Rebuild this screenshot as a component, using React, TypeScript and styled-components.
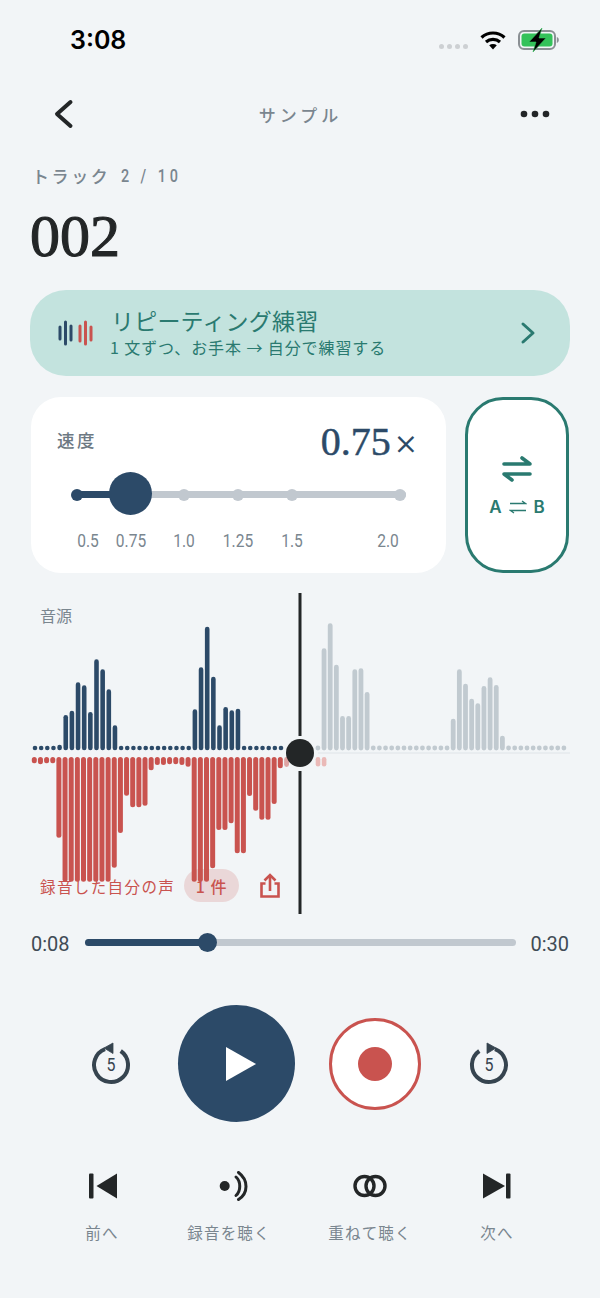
import React from "react";
import styled, { createGlobalStyle } from "styled-components";

const NAVY = "#2c4a68";
const RED = "#c9534f";
const TEAL = "#2a7a70";
const GREY = "#7a868f";
const INK = "#232627";
const CJK = '"Noto Sans CJK JP", "Noto Sans", sans-serif';
const SERIF = '"Liberation Serif", serif';

const Global = createGlobalStyle`
  html, body { margin: 0; padding: 0; background: #f2f5f7; }
  * { box-sizing: border-box; }
`;

const Page = styled.div`
  width: 600px;
  height: 1298px;
  background: #f2f5f7;
  font-family: ${CJK};
  overflow: hidden;
`;

const StatusBar = styled.div`
  height: 80px;
  display: flex;
  align-items: center;
  justify-content: space-between;
  padding: 0 40px 0 70px;
`;
const Time = styled.div`
  font: 600 25px/1 Inter, "Liberation Sans", sans-serif;
  color: #000;
`;
const IconsWrap = styled.div`
  display: flex;
  align-items: center;
  gap: 12px;
`;
const Signal = styled.div`
  display: flex;
  gap: 3px;
  margin-top: 12px;
`;
const SignalDot = styled.span`
  width: 5px;
  height: 5px;
  border-radius: 50%;
  background: #cdd0d3;
`;
const NavBar = styled.div`
  margin-top: 10px;
  height: 48px;
  display: flex;
  align-items: center;
  justify-content: space-between;
  padding: 0 50px 0 52px;
`;
const NavTitle = styled.div`
  font-size: 17px;
  font-weight: 500;
  letter-spacing: 4px;
  color: ${GREY};
  margin-left: 5px;
`;
const TrackLabel = styled.div`
  margin: 28px 0 0 32px;
  font-size: 17px;
  line-height: 20px;
  font-weight: 500;
  letter-spacing: 2.6px;
  color: ${GREY};
  display: flex;
`;
const TrackCount = styled.span`
  display: inline-block;
  margin-left: 11px;
  font: 500 18px/20px Roboto, sans-serif;
  letter-spacing: 4.9px;
  transform: scaleX(0.8);
  transform-origin: left center;
  white-space: pre;
`;
const Title = styled.h1`
  margin: 15px 0 0 30px;
  font: 400 60px/70px ${SERIF};
  -webkit-text-stroke: 1.1px ${INK};
  color: ${INK};
`;
const Banner = styled.div`
  margin: 19px 30px 0;
  height: 86px;
  border-radius: 36px;
  background: #c3e3de;
  display: flex;
  align-items: center;
  padding: 0 34px 0 28px;
  color: ${TEAL};
`;
const BannerText = styled.div`
  margin-left: 17px;
  margin-top: -3px;
  flex: 1;
`;
const BannerTitle = styled.div`
  font-size: 23px;
  line-height: 30px;
  letter-spacing: 0.2px;
`;
const BannerSub = styled.div`
  font-size: 16px;
  line-height: 24px;
  letter-spacing: 0.9px;
  margin-left: -1px;
`;
const SpeedRow = styled.div`
  margin: 21px 31px 0;
  height: 176px;
  display: flex;
  gap: 19px;
`;
const SpeedCard = styled.div`
  width: 415px;
  background: #fff;
  border-radius: 30px;
  padding: 23px 28px 0 26px;
`;
const SpeedHead = styled.div`
  display: flex;
  align-items: center;
  justify-content: space-between;
  height: 44px;
`;
const SpeedLabel = styled.div`
  font-size: 17.5px;
  font-weight: 500;
  letter-spacing: 2.5px;
  color: #6d7983;
  margin-top: -6px;
`;
const SpeedValue = styled.div`
  font: 400 40px/44px ${SERIF};
  -webkit-text-stroke: 0.5px ${NAVY};
  color: ${NAVY};
  display: flex;
  align-items: center;
`;
const Times = styled.span`
  font: 300 37px/44px Inter, "Liberation Sans", sans-serif;
  -webkit-text-stroke: 0;
  margin-left: 3px;
`;
const Slider = styled.div`
  position: relative;
  margin: 7px 0 0 20px;
  width: 329px;
  height: 46px;
`;
const Track = styled.div`
  position: absolute;
  left: 0;
  right: 0;
  top: 20px;
  height: 7px;
  border-radius: 4px;
  background: #c1c8cf;
`;
const TrackFill = styled.div`
  position: absolute;
  left: 0;
  top: 20px;
  height: 7px;
  width: 54px;
  background: ${NAVY};
`;
const Stop = styled.div<{ $active?: boolean }>`
  position: absolute;
  top: 17.5px;
  width: 12px;
  height: 12px;
  margin-left: -6px;
  border-radius: 50%;
  background: ${(p) => (p.$active ? NAVY : "#c1c8cf")};
`;
const Thumb = styled.div`
  position: absolute;
  top: 1px;
  left: 32px;
  width: 43px;
  height: 43px;
  border-radius: 50%;
  background: ${NAVY};
`;
const StopLabels = styled.div`
  position: relative;
  margin-left: 20px;
  height: 24px;
  margin-top: 12px;
`;
const StopLabel = styled.span`
  position: absolute;
  transform: translateX(-50%) scaleX(0.84);
  font: 400 18.5px/24px Roboto, sans-serif;
  color: ${GREY};
`;
const ABButton = styled.div`
  width: 104px;
  border: 3px solid ${TEAL};
  border-radius: 38px;
  background: #fff;
  display: flex;
  flex-direction: column;
  align-items: center;
  padding-top: 56px;
  color: ${TEAL};
`;
const ABRow = styled.div`
  margin-top: 15px;
  display: flex;
  align-items: center;
  gap: 7px;
  font: 600 17px/20px Inter, "Liberation Sans", sans-serif;
`;
const Wave = styled.div`
  position: relative;
  margin-top: 17px;
  height: 330px;
`;
const WaveSvg = styled.svg`
  display: block;
`;
const SourceLabel = styled.div`
  position: absolute;
  left: 40px;
  top: 14px;
  font-size: 16px;
  line-height: 22px;
  color: ${GREY};
`;
const RecRow = styled.div`
  position: absolute;
  left: 40px;
  top: 279px;
  height: 33px;
  display: flex;
  align-items: center;
  color: ${RED};
`;
const RecLabel = styled.div`
  font-size: 15.5px;
  letter-spacing: 1.4px;
`;
const CountPill = styled.div`
  margin-left: 9px;
  width: 55px;
  height: 33px;
  border-radius: 17px;
  background: rgba(201, 83, 79, 0.18);
  display: flex;
  align-items: center;
  justify-content: center;
  font-size: 16px;
  font-weight: 500;
  letter-spacing: 1px;
`;
const ShareIcon = styled.svg`
  margin-left: 20px;
`;
const ProgressRow = styled.div`
  margin: 12px 31px 0;
  height: 24px;
  display: flex;
  align-items: center;
  justify-content: space-between;
  font: 400 20px/24px Roboto, sans-serif;
  color: #404b55;
`;
const Progress = styled.div`
  position: relative;
  width: 431px;
  height: 7px;
  margin-top: -4px;
  border-radius: 4px;
  background: #c1c8cf;
`;
const ProgressFill = styled.div`
  height: 7px;
  border-radius: 4px;
  background: ${NAVY};
`;
const ProgressKnob = styled.div`
  position: absolute;
  top: -6px;
  width: 19px;
  height: 19px;
  margin-left: -9px;
  border-radius: 50%;
  background: ${NAVY};
`;
const Controls = styled.div`
  margin-top: 49px;
  height: 117px;
  display: flex;
  align-items: center;
  padding-left: 91px;
`;
const PlayButton = styled.div`
  width: 117px;
  height: 117px;
  margin: 0 34px 0 47px;
  border-radius: 50%;
  background: ${NAVY};
  display: flex;
  align-items: center;
  justify-content: center;
`;
const RecordButton = styled.div`
  width: 92px;
  height: 92px;
  margin-right: 48px;
  border-radius: 50%;
  border: 3.5px solid ${RED};
  background: #fff;
  display: flex;
  align-items: center;
  justify-content: center;
`;
const RecordDot = styled.div`
  width: 34px;
  height: 34px;
  border-radius: 50%;
  background: ${RED};
`;
const SkipText = styled.text`
  font: 400 19px Roboto, sans-serif;
  fill: #36444f;
`;
const BottomNav = styled.div`
  margin: 49px 0 0 52px;
  display: grid;
  grid-template-columns: 100px 154px 128px 126px;
`;
const NavItem = styled.div`
  display: flex;
  flex-direction: column;
  align-items: center;
  gap: 19px;
`;
const NavItemLabel = styled.div`
  font-size: 15.5px;
  line-height: 24px;
  letter-spacing: 1.2px;
  color: ${GREY};
`;

const blue: Record<number, number> = {
  5: 375, 6: 362, 7: 277, 8: 286, 9: 366, 10: 208, 11: 238, 12: 298, 13: 406,
  26: 358, 27: 232, 28: 110, 29: 260, 30: 406, 31: 351, 32: 361, 33: 356, 4: 464,
};
const grey: Record<number, number> = {
  47: 175, 48: 100, 49: 224, 50: 378, 51: 378, 52: 238, 53: 235, 54: 306,
  68: 386, 69: 238, 70: 281, 71: 326, 72: 340, 73: 288, 74: 262, 75: 285, 76: 437,
};
const red = [55, 58, 55, 55, 278, 410, 410, 410, 410, 410, 410, 410, 410, 368, 264, 152, 187, 187, 182, 76, 60, 60, 58, 58, 60, 65, 410, 410, 410, 370, 255, 255, 235, 325, 325, 153, 197, 224, 224, 177, 70];

const bar = (i: number) => 35 + 6.15 * i;

const WaveChart = () => (
  <WaveSvg width={600} height={330} viewBox="0 590 600 330">
    <line x1={318} y1={753} x2={570} y2={753} stroke="#dfe4e8" strokeWidth={1} />
    {Array.from({ length: 41 }, (_, i) => {
      const top = blue[i] !== undefined ? 590 + blue[i] / 3 : 745.7;
      return <rect key={i} x={bar(i) - 2.3} y={top} width={4.6} height={750.3 - top} rx={2.3} fill={NAVY} />;
    })}
    {Array.from({ length: 41 }, (_, i) => {
      const i2 = i + 46;
      const top = grey[i2] !== undefined ? 590 + grey[i2] / 3 : 745.5;
      return <rect key={i2} x={bar(i2) - 2.4} y={top} width={4.8} height={750.5 - top} rx={2.4} fill="#c1cad0" />;
    })}
    {red.map((v, i) => (
      <rect key={i} x={bar(i) - 0.7 - 2.5} y={757} width={5} height={745 + v / 3 - 757} rx={2.5} fill={RED} />
    ))}
    <rect x={bar(41) - 3} y={757} width={4.8} height={10} rx={2.4} fill={RED} opacity={0.5} />
    <rect x={315.7} y={757} width={4.6} height={9.5} rx={2.3} fill="#eab9b7" />
    <rect x={321.8} y={757} width={4.6} height={9.5} rx={2.3} fill="#eab9b7" />
    <rect x={298.5} y={593} width={3} height={143} fill={INK} />
    <rect x={298.5} y={771} width={3} height={143} fill={INK} />
    <circle cx={300} cy={753} r={14} fill={INK} />
  </WaveSvg>
);

const Wifi = () => (
  <svg width={26} height={20} viewBox="0 0 26 20" fill="none" stroke="#000" strokeWidth={3.2}>
    <path d="M1.500 7.500C8 1.500 18 1.500 24.500 7.500" />
    <path d="M6 12C10 8.500 16 8.500 20 12" />
    <path d="M13 19.500l-3.800-4.200c2.200-1.600 5.400-1.600 7.600 0z" fill="#000" stroke="none" />
  </svg>
);

const Battery = () => (
  <svg width={42} height={24} viewBox="0 0 42 24" fill="none">
    <rect x={1} y={3} width={36} height={18} rx={5} stroke="#8b9094" strokeWidth={2} fill="none" />
    <rect x={3.500} y={5.500} width={31} height={13} rx={3} fill="#34c25a" />
    <path d="M38.800 9v6c1.400-.4 2-1.600 2-3s-.6-2.600-2-3z" fill="#8b9094" />
    <path d="M24 0 11 14h7L15 24 28 10h-7z" fill="#000" stroke="#34c25a" strokeWidth={0.6} />
  </svg>
);

const SkipIcon = ({ flip }: { flip?: boolean }) => (
  <svg width={40} height={44} viewBox="0 0 40 44" fill="none">
    <g transform={flip ? "matrix(-1 0 0 1 40 0)" : undefined}>
      <path d="M14 7.100A17 17 0 1 0 29.700 9" stroke="#36444f" strokeWidth={4} />
      <path d="M22 1v10.500L13 6z" fill="#36444f" stroke="#36444f" strokeWidth={0.8} strokeLinejoin="round" />
    </g>
    <SkipText x={20} y={29.500} textAnchor="middle" transform="translate(20 0) scale(0.84 1) translate(-20 0)">5</SkipText>
  </svg>
);

const stops = [107, 161, 215, 323];
const labels: [string, number][] = [["0.5", 11], ["0.75", 54], ["1.0", 107], ["1.25", 161], ["1.5", 215], ["2.0", 311]];

export default function App() {
  return (
    <Page>
      <Global />
      <StatusBar>
        <Time>3:08</Time>
        <IconsWrap>
          <Signal>
            <SignalDot />
            <SignalDot />
            <SignalDot />
            <SignalDot />
          </Signal>
          <Wifi />
          <Battery />
        </IconsWrap>
      </StatusBar>
      <NavBar>
        <svg width={24} height={36} viewBox="0 0 24 36" fill="none" stroke={INK} strokeWidth={4} strokeLinecap="round" strokeLinejoin="round">
          <path d="M18.500 6 5 18l13.500 12" />
        </svg>
        <NavTitle>サンプル</NavTitle>
        <svg width={30} height={8} viewBox="0 0 30 8" fill={INK}>
          <circle cx={4} cy={4} r={3.300} />
          <circle cx={15} cy={4} r={3.300} />
          <circle cx={26} cy={4} r={3.300} />
        </svg>
      </NavBar>
      <TrackLabel>
        トラック<TrackCount>2 / 10</TrackCount>
      </TrackLabel>
      <Title>002</Title>
      <Banner>
        <svg width={36} height={26} viewBox="0 0 36 26" fill="none" strokeWidth={3} strokeLinecap="round">
          <g stroke={NAVY}>
            <path d="M2 7v12M7.500 2v22M13 6v14" />
          </g>
          <g stroke={RED}>
            <path d="M22 6v15M27.500 2v22M33 7v13" />
          </g>
        </svg>
        <BannerText>
          <BannerTitle>リピーティング練習</BannerTitle>
          <BannerSub>1 文ずつ、お手本 → 自分で練習する</BannerSub>
        </BannerText>
        <svg width={16} height={24} viewBox="0 0 16 24" fill="none" stroke={TEAL} strokeWidth={3} strokeLinecap="round" strokeLinejoin="round">
          <path d="M3 3l10 9-10 9" />
        </svg>
      </Banner>
      <SpeedRow>
        <SpeedCard>
          <SpeedHead>
            <SpeedLabel>速度</SpeedLabel>
            <SpeedValue>
              0.75<Times>×</Times>
            </SpeedValue>
          </SpeedHead>
          <Slider>
            <Track />
            <TrackFill />
            <Stop $active style={{ left: 0 }} />
            {stops.map((s) => (
              <Stop key={s} style={{ left: s }} />
            ))}
            <Thumb />
          </Slider>
          <StopLabels>
            {labels.map(([t, x]) => (
              <StopLabel key={t} style={{ left: x }}>{t}</StopLabel>
            ))}
          </StopLabels>
        </SpeedCard>
        <ABButton>
          <svg width={30} height={26} viewBox="0 0 30 26" fill="none" stroke={TEAL} strokeWidth={3.600} strokeLinecap="round" strokeLinejoin="round">
            <path d="M2 8h26L20 2" />
            <path d="M28 18H2l8 6" />
          </svg>
          <ABRow>
            A
            <svg width={18} height={16} viewBox="0 0 18 16" fill="none" stroke={TEAL} strokeWidth={1.300}>
              <path d="M1 4.500h15.500L13 2" />
              <path d="M17 11.500H1.500L5 14" />
            </svg>
            B
          </ABRow>
        </ABButton>
      </SpeedRow>
      <Wave>
        <WaveChart />
        <SourceLabel>音源</SourceLabel>
        <RecRow>
          <RecLabel>録音した自分の声</RecLabel>
          <CountPill>1 件</CountPill>
          <ShareIcon width={22} height={26} viewBox="0 0 22 26" fill="none" stroke={RED} strokeWidth={2.600}>
            <path d="M6.500 10.500H2.500V23.500H19.500V10.500H15.500" />
            <path d="M11 18V3" />
            <path d="M5.500 7.500 11 2l5.500 5.500" />
          </ShareIcon>
        </RecRow>
      </Wave>
      <ProgressRow>
        <span>0:08</span>
        <Progress>
          <ProgressFill style={{ width: "28.500%" }} />
          <ProgressKnob style={{ left: "28.500%" }} />
        </Progress>
        <span>0:30</span>
      </ProgressRow>
      <Controls>
        <SkipIcon />
        <PlayButton>
          <svg width={30} height={34} viewBox="0 0 30 34" fill="#fff" style={{ marginLeft: 9 }}>
            <path d="M0 0v34L30 17z" />
          </svg>
        </PlayButton>
        <RecordButton>
          <RecordDot />
        </RecordButton>
        <SkipIcon flip />
      </Controls>
      <BottomNav>
        <NavItem>
          <svg width={30} height={30} viewBox="0 0 30 30" fill={INK}>
            <rect x={2} y={2.500} width={4.500} height={25} rx={1} />
            <path d="M30 2.500v25L9.500 15z" />
          </svg>
          <NavItemLabel>前へ</NavItemLabel>
        </NavItem>
        <NavItem>
          <svg width={38} height={30} viewBox="0 0 38 30" fill="none" stroke={INK} strokeWidth={3} strokeLinecap="round">
            <circle cx={14.700} cy={15} r={5} fill={INK} stroke="none" />
            <path d="M26 6C31 10.500 31 20 26 24.500" />
            <path d="M28.500 1.500C38.500 9 38.500 22 28.500 28.500" />
          </svg>
          <NavItemLabel>録音を聴く</NavItemLabel>
        </NavItem>
        <NavItem>
          <svg width={34} height={30} viewBox="0 0 34 30" fill="none" stroke={INK} strokeWidth={3.400}>
            <circle cx={11.500} cy={15} r={9.500} />
            <circle cx={22.500} cy={15} r={9.500} />
          </svg>
          <NavItemLabel>重ねて聴く</NavItemLabel>
        </NavItem>
        <NavItem>
          <svg width={30} height={30} viewBox="0 0 30 30" fill={INK}>
            <path d="M1 2.500v25L23 15z" />
            <rect x={24} y={2.500} width={4.500} height={25} rx={1} />
          </svg>
          <NavItemLabel>次へ</NavItemLabel>
        </NavItem>
      </BottomNav>
    </Page>
  );
}
